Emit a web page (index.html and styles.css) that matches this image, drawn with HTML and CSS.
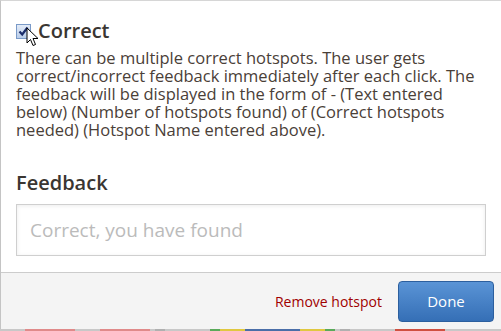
FILE: index.html
```html
<!DOCTYPE html>
<html lang="en">
<head>
  <meta charset="UTF-8">
  <title>Hotspot settings</title>
  <link rel="stylesheet" href="styles.css">
</head>
<body>
  <div class="dialog">
    <div class="dialog-body">
      <label class="check-title">
        <span class="checkbox">
          <svg width="11" height="11" viewBox="0 0 11 11"><path d="M1.5 5.5 L4.2 8.5 L9.5 1.5" fill="none" stroke="#1b2d6b" stroke-width="2.2"/></svg>
        </span>
        <span class="title">Correct</span>
        <svg class="cursor" width="14" height="21" viewBox="0 0 14 21"><path d="M1 1 L1 16 L4.5 12.5 L7 18.5 L9.5 17.5 L7 11.5 L12 11.5 Z" fill="#fff" stroke="#000" stroke-width="1"/></svg>
      </label>
      <p class="desc">There can be multiple correct hotspots. The user gets correct/incorrect feedback immediately after each click. The feedback will be displayed in the form of - (Text entered below) (Number of hotspots found) of (Correct hotspots needed) (Hotspot Name entered above).</p>
      <h3 class="field-label">Feedback</h3>
      <input class="field" type="text" placeholder="Correct, you have found">
    </div>
    <div class="dialog-footer">
      <a class="remove-link" href="#">Remove hotspot</a>
      <button class="btn-done">Done</button>
    </div>
  </div>
  <div class="under-strip">
    <span class="seg gap-25"></span>
    <span class="seg pink w50"></span>
    <span class="seg gap-25"></span>
    <span class="seg pink w50"></span>
    <span class="seg gap-5"></span>
    <span class="seg grey w10"></span>
    <span class="seg gap-45"></span>
    <span class="seg green w10"></span>
    <span class="seg yellow w25"></span>
    <span class="seg blue w55"></span>
    <span class="seg yellow w25"></span>
    <span class="seg green w10"></span>
    <span class="seg gap-5"></span>
    <span class="seg grey w10"></span>
    <span class="seg gap-45"></span>
    <span class="seg red w50"></span>
  </div>
</body>
</html>
```

FILE: styles.css
```css
html, body {
  margin: 0;
  padding: 0;
}
body {
  font-family: 'Open Sans', 'Noto Sans', sans-serif;
  width: 501px;
  height: 331px;
  overflow: hidden;
  background: #ccc;
}
.dialog {
  box-sizing: border-box;
  height: 329px;
  border-top: 1px solid #d6d6d6;
  border-left: 1px solid #c4c4c4;
  background: #fff;
  display: flex;
  flex-direction: column;
}
.dialog-body {
  flex: 1;
  padding: 17px 14px 0 15px;
}
.check-title {
  display: flex;
  align-items: center;
  gap: 7px;
  position: relative;
  height: 26px;
}
.checkbox {
  width: 13px;
  height: 13px;
  border: 1px solid #7a9ac8;
  background: linear-gradient(#e3ebf7, #b9cdea);
  display: flex;
  align-items: center;
  justify-content: center;
}
.cursor {
  position: absolute;
  left: 10px;
  top: 9px;
}
.title {
  font-size: 20px;
  line-height: 26px;
  font-weight: 600;
  color: #3a3632;
}
.desc {
  margin: 5px 0 0;
  font-size: 16.5px;
  line-height: 18px;
  color: #4a4038;
}
.field-label {
  margin: 31px 0 0;
  font-size: 20px;
  line-height: 26px;
  font-weight: 600;
  color: #3a3632;
}
.field {
  display: block;
  box-sizing: border-box;
  width: 470px;
  height: 52px;
  margin-top: 8px;
  padding: 0 13px;
  border: 1px solid #cfcfcf;
  box-shadow: inset 0 1px 4px rgba(0, 0, 0, 0.08);
  font-family: inherit;
  font-size: 19px;
  color: #333;
  outline: none;
}
.field::placeholder {
  color: #bbb;
}
.dialog-footer {
  height: 56px;
  border-top: 1px solid #cccccc;
  background: #f4f4f4;
  display: flex;
  align-items: center;
  justify-content: flex-end;
  gap: 16px;
  padding-right: 7px;
}
.remove-link {
  color: #a00000;
  font-size: 14px;
  text-decoration: none;
}
.btn-done {
  width: 96px;
  height: 41px;
  border: 1px solid #2c5f9e;
  border-radius: 4px;
  background: linear-gradient(#5a94d6, #356fb6);
  color: #fff;
  font-family: inherit;
  font-size: 15px;
  cursor: pointer;
}
.under-strip {
  height: 2px;
  display: flex;
  background: #c8c8c8;
}
.seg {
  height: 2px;
}
.gap-25 { width: 25px; }
.gap-5 { width: 5px; }
.gap-45 { width: 45px; }
.w10 { width: 10px; }
.w25 { width: 25px; }
.w50 { width: 50px; }
.w55 { width: 55px; }
.pink { background: #e08a8a; }
.grey { background: #b0b0b0; }
.green { background: #5aaa5a; }
.yellow { background: #e0c840; }
.blue { background: #4a6ea8; }
.red { background: #d05040; }
```
